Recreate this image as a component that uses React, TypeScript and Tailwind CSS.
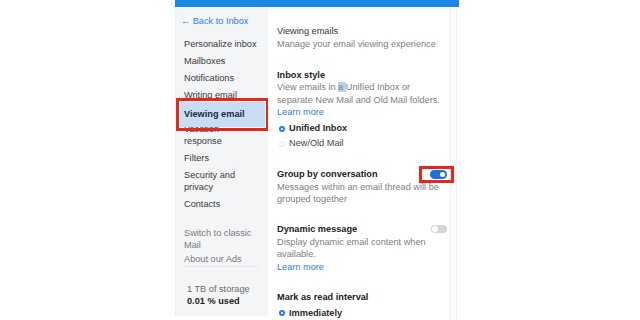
import React from 'react';

const font = { fontFamily: '"Liberation Sans", Arial, sans-serif' };

function Radio({ checked, label }: { checked?: boolean; label: string }) {
  return (
    <div className="flex h-[15px] items-center">
      {checked ? (
        <span className="ml-[2px] h-[6px] w-[6px] rounded-full border-[2px] border-[#2a7de1] bg-white" />
      ) : (
        <span className="ml-[2px] h-[6px] w-[6px] rounded-full border border-[#e6e6e6] bg-white" />
      )}
      <span className={`ml-[4px] ${checked ? 'font-bold text-[#2b2b2b]' : 'text-[#444]'}`}>{label}</span>
    </div>
  );
}

function Toggle({ on }: { on?: boolean }) {
  return on ? (
    <span className="flex h-[9px] w-[17px] items-center justify-end rounded-full bg-[#1f6fe0] pr-[2px]">
      <span className="h-[5px] w-[5px] rounded-full bg-white" />
    </span>
  ) : (
    <span className="flex h-[8px] w-[16px] items-center rounded-full bg-[#d3d5d9] pl-[1px]">
      <span className="h-[6px] w-[6px] rounded-full bg-white" />
    </span>
  );
}

export default function App() {
  const navItems = ['Personalize inbox', 'Mailboxes', 'Notifications', 'Writing email'];

  return (
    <div className="flex h-[320px] w-[640px] overflow-hidden bg-white pl-[175px] text-[9.2px] leading-[12px]" style={font}>
      <div className="flex w-[284px] flex-col">
        <div className="h-[7px] shrink-0 bg-[#1d87e4]" />
        <div className="flex min-h-0 flex-1">
          {/* sidebar */}
          <div className="flex h-[309px] w-[93px] shrink-0 flex-col border-l border-[#eceef1] bg-[#f4f5f7]">
            <div className="mt-[8px] pl-[5px] text-[#2c7fe0]">← Back to Inbox</div>
            <div className="mt-[8.5px] flex h-[226.5px] shrink-0 flex-col overflow-hidden pl-[8px] text-[#3a3a3a]">
              {navItems.map((item) => (
                <div key={item} className="py-[2.5px]">{item}</div>
              ))}
              <div className="relative z-10 py-[2.5px]">
                <div className="absolute left-[-4px] right-[3px] top-[-2px] bottom-[-6px] bg-[#c9dcf6]" />
                <div className="absolute left-[-8px] right-[-1px] top-[-6px] bottom-[-10px] border-[3.5px] border-[#e5281c]" />
                <span className="relative top-[1.5px] font-bold text-[#1f2a3a]">Viewing email</span>
              </div>
              <div className="py-[2.5px]">Vacation<br />response</div>
              <div className="py-[2.5px]">Filters</div>
              <div className="py-[2.5px]">Security and<br />privacy</div>
              <div className="py-[2.5px]">Contacts</div>
              <div className="mt-[12px] shrink-0 pt-[2.5px] text-[#7a7a7a]">Switch to classic<br />Mail</div>
              <div className="mt-[2px] shrink-0 text-[#7a7a7a]">About our Ads</div>
            </div>
            <div className="ml-[8px] mr-[10px] mt-[4px] border-t border-[#e3e5e8]" />
            <div className="mt-[16px] pl-[11px] text-[#6b6b6b]">1 TB of storage</div>
            <div className="pl-[11px] font-bold text-[#222]">0.01 % used</div>
          </div>

          {/* content */}
          <div className="flex w-[183px] shrink-0 flex-col border-r border-[#eef0f2] pl-[9px] pr-[3px] leading-[12.5px]">
            <div className="mt-[18px] text-[#333]">Viewing emails</div>
            <div className="text-[#808080]">Manage your email viewing experience</div>

            <div className="mt-[18.5px] font-bold text-[#222]">Inbox style</div>
            <div className="text-[#808080]">
              View emails in <span className="bg-[#b8d3f5]">a </span>Unified Inbox or
              <br />
              separate New Mail and Old Mail folders.
            </div>
            <div className="text-[#2f7fd8]">Learn more</div>
            <div className="mt-[2.5px]">
              <Radio checked label="Unified Inbox" />
              <Radio label="New/Old Mail" />
            </div>

            <div className="mt-[17px] flex items-center justify-between">
              <span className="font-bold text-[#222]">Group by conversation</span>
              <span className="relative flex items-center">
                <Toggle on />
                <span className="absolute left-[-11px] right-[-7px] top-[-4px] bottom-[-4px] border-[3px] border-[#e5281c]" />
              </span>
            </div>
            <div className="text-[#808080]">
              Messages within an email thread will be
              <br />
              grouped together
            </div>

            <div className="mt-[17.5px] flex items-center justify-between">
              <span className="font-bold text-[#222]">Dynamic message</span>
              <Toggle />
            </div>
            <div className="text-[#808080]">
              Display dynamic email content when
              <br />
              available.
            </div>
            <div className="text-[#2f7fd8]">Learn more</div>

            <div className="mt-[18px] font-bold text-[#222]">Mark as read interval</div>
            <div className="mt-[2px]">
              <Radio checked label="Immediately" />
            </div>
          </div>
          <div className="w-[6px] shrink-0 border-r border-[#f0f1f3] bg-[#fcfcfd]" />
        </div>
      </div>
    </div>
  );
}
